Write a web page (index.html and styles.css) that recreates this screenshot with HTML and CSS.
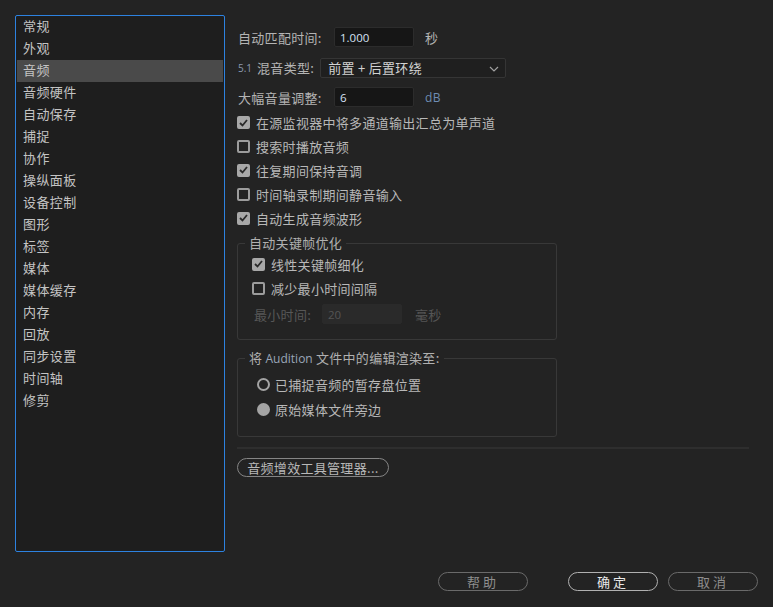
FILE: index.html
```html
<!DOCTYPE html>
<html lang="zh-CN">
<head>
<meta charset="utf-8">
<title>首选项 - 音频</title>
<link rel="stylesheet" href="styles.css">
</head>
<body>
<div class="dialog">
  <div class="main">
    <ul class="nav">
      <li>常规</li>
      <li>外观</li>
      <li class="active">音频</li>
      <li>音频硬件</li>
      <li>自动保存</li>
      <li>捕捉</li>
      <li>协作</li>
      <li>操纵面板</li>
      <li>设备控制</li>
      <li>图形</li>
      <li>标签</li>
      <li>媒体</li>
      <li>媒体缓存</li>
      <li>内存</li>
      <li>回放</li>
      <li>同步设置</li>
      <li>时间轴</li>
      <li>修剪</li>
    </ul>
    <div class="panel">
      <div class="row field-row">
        <span class="label">自动匹配时间:</span>
        <span class="input">1.000</span>
        <span class="unit">秒</span>
      </div>
      <div class="row mix-row">
        <span class="badge">5.1</span>
        <span class="label-inline">混音类型:</span>
        <span class="select">前置 + 后置环绕
          <svg class="chev" width="10" height="6" viewBox="0 0 10 6"><path d="M1 1 L5 5 L9 1" fill="none" stroke="#a0a0a0" stroke-width="1.2"/></svg>
        </span>
      </div>
      <div class="row field-row">
        <span class="label">大幅音量调整:</span>
        <span class="input">6</span>
        <span class="unit blue">dB</span>
      </div>
      <div class="checks">
        <div class="check on"><span class="box"><svg width="9" height="8" viewBox="0 0 9 8"><path d="M1 4 L3.5 6.5 L8 1" fill="none" stroke="#2a2a2a" stroke-width="1.8"/></svg></span>在源监视器中将多通道输出汇总为单声道</div>
        <div class="check"><span class="box"></span>搜索时播放音频</div>
        <div class="check on"><span class="box"><svg width="9" height="8" viewBox="0 0 9 8"><path d="M1 4 L3.5 6.5 L8 1" fill="none" stroke="#2a2a2a" stroke-width="1.8"/></svg></span>往复期间保持音调</div>
        <div class="check"><span class="box"></span>时间轴录制期间静音输入</div>
        <div class="check on"><span class="box"><svg width="9" height="8" viewBox="0 0 9 8"><path d="M1 4 L3.5 6.5 L8 1" fill="none" stroke="#2a2a2a" stroke-width="1.8"/></svg></span>自动生成音频波形</div>
      </div>
      <fieldset class="group g1">
        <legend>自动关键帧优化</legend>
        <div class="inner">
          <div class="check on"><span class="box"><svg width="9" height="8" viewBox="0 0 9 8"><path d="M1 4 L3.5 6.5 L8 1" fill="none" stroke="#2a2a2a" stroke-width="1.8"/></svg></span>线性关键帧细化</div>
          <div class="check"><span class="box"></span>减少最小时间间隔</div>
          <div class="row disabled-row">
            <span class="label-dis">最小时间:</span>
            <span class="input dis">20</span>
            <span class="unit dis-text">毫秒</span>
          </div>
        </div>
      </fieldset>
      <fieldset class="group g2">
        <legend>将 <span class="en">Audition</span> 文件中的编辑渲染至:</legend>
        <div class="inner radios">
          <div class="radio"><span class="ring"></span>已捕捉音频的暂存盘位置</div>
          <div class="radio on"><span class="ring"></span>原始媒体文件旁边</div>
        </div>
      </fieldset>
      <div class="sep"></div>
      <div class="btn-row"><span class="btn plugin">音频增效工具管理器...</span></div>
    </div>
  </div>
  <div class="footer">
    <span class="btn foot">帮助</span>
    <span class="btn foot primary">确定</span>
    <span class="btn foot">取消</span>
  </div>
</div>
</body>
</html>
```
FILE: styles.css
```css
* { box-sizing: border-box; }
html, body {
  margin: 0;
  padding: 0;
  background: #232323;
  width: 773px;
  height: 607px;
  overflow: hidden;
}
body {
  font-family: "Noto Sans CJK SC", "Noto Sans", sans-serif;
  font-size: 13px;
  color: #b4b4b4;
  letter-spacing: 0.3px;
}
.dialog {
  padding: 15px 15px 0 15px;
}
.main {
  display: flex;
  height: 537px;
}
.nav {
  list-style: none;
  margin: 0;
  padding: 0 1px;
  width: 210px;
  height: 537px;
  border: 1px solid #2d82e0;
  border-radius: 2px;
  background: #1e1e1e;
}
.nav li {
  height: 22px;
  line-height: 20px;
  padding-left: 6px;
  color: #c4c4c4;
  letter-spacing: 0.4px;
}
.nav li.active {
  background: #4a4a4a;
  height: 21.5px;
}
.panel {
  flex: 1;
  margin-left: 12px;
  padding-top: 12px;
}
.row {
  display: flex;
  align-items: center;
}
.field-row {
  height: 20px;
  padding-left: 1px;
}
.field-row + .mix-row { margin-top: 11px; }
.mix-row + .field-row { margin-top: 10px; }
.label {
  width: 96px;
}
.input {
  width: 80px;
  height: 20px;
  line-height: 19px;
  background: #161616;
  border: 1px solid #2c2c2c;
  border-radius: 2px;
  padding-left: 5px;
  color: #d6e2f4;
  font-family: "Open Sans", "Noto Sans", sans-serif;
  font-size: 11.5px;
  letter-spacing: 0;
}
.unit {
  margin-left: 11px;
}
.unit.blue {
  color: #6e8db4;
  font-family: "Open Sans", sans-serif;
  font-size: 12px;
}
.mix-row {
  height: 19px;
  padding-left: 1px;
}
.badge {
  font-family: "Open Sans", sans-serif;
  font-size: 10px;
  color: #8c9ab0;
  margin-right: 5px;
  letter-spacing: 0;
}
.label-inline {
  margin-right: 6px;
}
.select {
  position: relative;
  width: 186px;
  height: 20px;
  line-height: 18px;
  border: 1px solid #353535;
  border-radius: 2px;
  background: #1f1f1f;
  padding-left: 7px;
  color: #d2d2d2;
}
.chev {
  position: absolute;
  right: 6px;
  top: 7px;
}
.checks {
  margin-top: 4px;
}
.check {
  display: flex;
  align-items: center;
  height: 23.8px;
  color: #b8b8b8;
}
.box {
  width: 13px;
  height: 13px;
  border: 2px solid #9c9c9c;
  border-radius: 2px;
  margin-right: 6px;
  display: flex;
  align-items: center;
  justify-content: center;
  flex: none;
}
.check.on .box {
  background: #a8a8a8;
  border-color: #a8a8a8;
}
.group {
  margin: 4.5px 0 0 0;
  width: 320px;
  border: 1px solid #383838;
  border-radius: 3px;
  padding: 0 0 0 7px;
}
.group legend {
  padding: 0 4px;
  height: 18px;
  line-height: 18px;
  color: #b0b0b0;
}
.en {
  font-family: "Open Sans", sans-serif;
  font-size: 12px;
  color: #9aa6b8;
  letter-spacing: 0;
}
.g1 .inner {
  padding: 0 0 13px 7px;
}
.g1 .check {
  height: 24px;
}
.disabled-row {
  margin-top: 2px;
  height: 24px;
  padding-left: 2px;
}
.label-dis {
  color: #575757;
  width: 68px;
}
.input.dis {
  background: #2a2a2a;
  border-color: #2a2a2a;
  color: #555;
}
.dis-text {
  color: #555;
  margin-left: 13px;
}
.g2 {
  margin-top: 9px;
}
.radios {
  padding: 5px 0 14px 12px;
}
.radio {
  display: flex;
  align-items: center;
  height: 25px;
  color: #b8b8b8;
}
.ring {
  width: 13px;
  height: 13px;
  border: 2px solid #a4a4a4;
  border-radius: 50%;
  margin-right: 5px;
  flex: none;
}
.radio.on .ring {
  background: #a4a4a4;
}
.sep {
  margin-top: 10px;
  height: 2px;
  background: #2e2e2e;
  width: 512px;
}
.btn-row {
  margin-top: 9px;
  display: flex;
}
.btn {
  display: inline-flex;
  align-items: center;
  justify-content: center;
  height: 19px;
  border: 1.5px solid #6a6a6a;
  border-radius: 10px;
  color: #a8a8a8;
}
.plugin {
  width: 152px;
  color: #b8b8b8;
  border-color: #858585;
  letter-spacing: 0.3px;
}
.footer {
  display: flex;
  justify-content: flex-end;
  margin-top: 20px;
}
.foot {
  width: 90px;
  color: #8e8e8e;
  letter-spacing: 3px;
}
.foot:first-child {
  margin-right: 40px;
}
.foot.primary {
  color: #e8e8e8;
  border-color: #b0b0b0;
  margin-right: 10px;
}
```
